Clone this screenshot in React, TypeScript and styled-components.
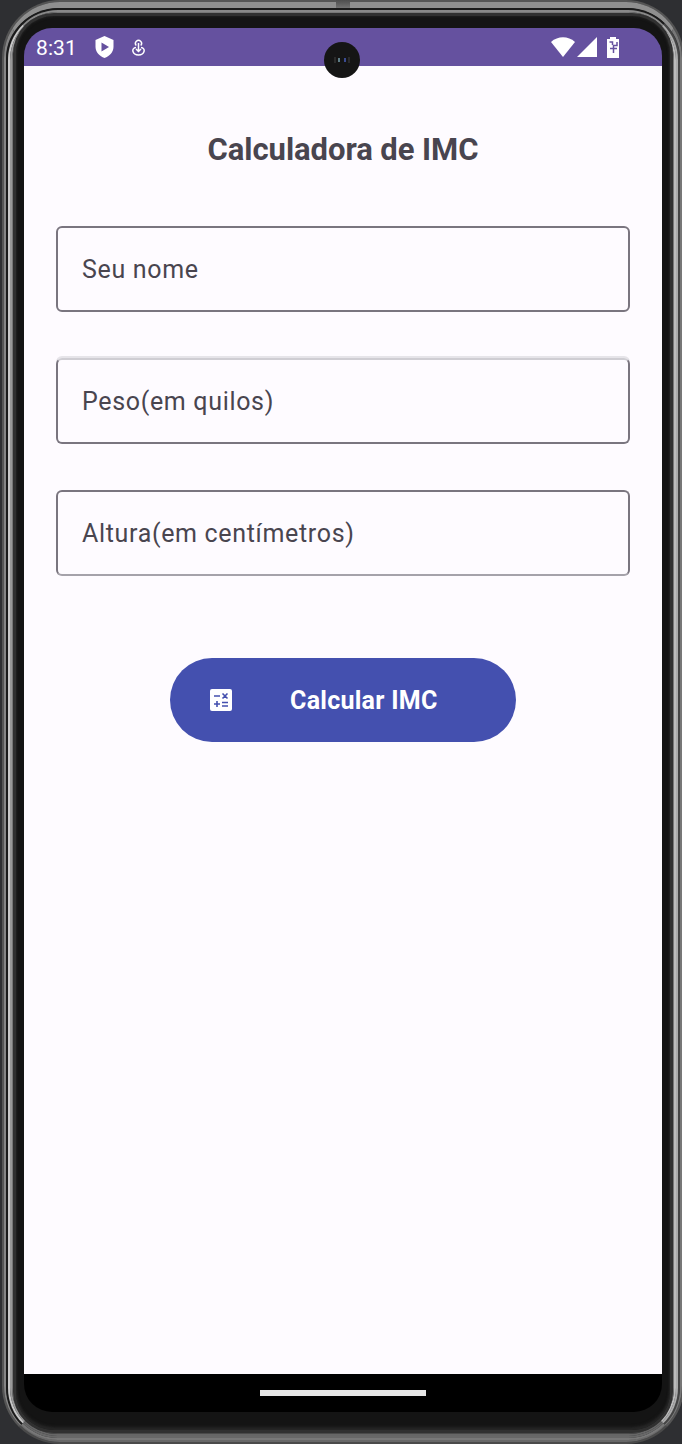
import React from "react";
import styled, { createGlobalStyle } from "styled-components";

const Global = createGlobalStyle`
  * { box-sizing: border-box; }
  body { margin: 0; background: #2e2f32; font-family: Roboto, "Liberation Sans", sans-serif; }
`;

const Stage = styled.div`
  width: 682px;
  height: 1444px;
  padding-left: 2px;
  overflow: hidden;
  display: flex;
  position: relative;
  background: #2e2f32;
`;

const Device = styled.div`
  width: 682px;
  height: 1444px;
  flex: none;
`;

const Ring = styled.div<{ $w: string; $c: string; $r: number }>`
  height: 100%;
  width: 100%;
  border-style: solid;
  border-width: ${(p) => p.$w};
  border-color: ${(p) => p.$c};
  border-radius: ${(p) => p.$r}px;
`;

const Bezel = styled.div`
  height: 100%;
  background: #141414;
  border-radius: 38px;
  padding: 12px 8px 18px;
  box-shadow: 0 0 0 3px #303030, inset 0 0 3px #292929, inset 0 -3px 3px #262626;
`;

const AntennaGap = styled.div`
  position: absolute;
  left: 336px;
  top: 0;
  width: 14px;
  height: 8px;
  background: linear-gradient(#4d4d4d, #727272);
`;

const Screen = styled.main`
  height: 100%;
  display: flex;
  flex-direction: column;
  border-radius: 28px;
  overflow: hidden;
  position: relative;
`;

const StatusBar = styled.header`
  height: 38px;
  flex: none;
  background: #65519f;
  display: flex;
  align-items: center;
  padding: 0 43px 0 12px;
  color: #fff;
`;

const Time = styled.span`
  font-size: 21px;
  font-weight: 400;
  letter-spacing: 0.1px;
  line-height: 38px;
  width: 59px;
  padding-top: 2px;
`;

const Glyph = styled.svg<{ $gap?: number }>`
  display: block;
  flex: none;
  margin-right: ${(p) => p.$gap ?? 0}px;
`;

const Spacer = styled.div`
  flex: 1;
`;

const Camera = styled.div`
  position: absolute;
  left: 300px;
  top: 14px;
  width: 36px;
  height: 36px;
  border-radius: 50%;
  background: #151515;
  display: flex;
  align-items: center;
  justify-content: center;
`;

const Content = styled.section`
  flex: 1;
  display: flex;
  flex-direction: column;
  align-items: center;
  padding: 64px 32px 0;
  background: #fefbff;
`;

const Title = styled.h1`
  margin: 0 0 56px;
  font-size: 31px;
  line-height: 40px;
  font-weight: 700;
  letter-spacing: -0.06px;
  color: #49454f;
  white-space: nowrap;
`;

const Field = styled.label<{ $top?: string; $bottom?: string; $halo?: string }>`
  width: 574px;
  height: 86px;
  margin-bottom: 46px;
  border: 2px solid #7a757f;
  border-top-color: ${(p) => p.$top ?? "#7a757f"};
  border-bottom-color: ${(p) => p.$bottom ?? "#7a757f"};
  border-radius: 6px;
  box-shadow: ${(p) => (p.$halo ? `0 -2px 0 ${p.$halo}` : "none")};
  display: flex;
  align-items: center;
  padding-left: 24px;
  font-size: 25px;
  letter-spacing: 0.67px;
  color: #49454f;
`;

const Button = styled.button`
  margin-top: 36px;
  width: 346px;
  height: 84px;
  border: 0;
  border-radius: 42px;
  background: #4450af;
  color: #fff;
  display: flex;
  align-items: center;
  padding: 0 0 0 40px;
  font: 700 25px Roboto, sans-serif;
`;

const ButtonText = styled.span`
  margin-left: 58px;
  letter-spacing: 0.27px;
  white-space: nowrap;
`;

const NavBar = styled.footer`
  height: 38px;
  flex: none;
  background: #000;
  display: flex;
  align-items: center;
  justify-content: center;
`;

const Handle = styled.div`
  width: 166px;
  height: 6px;
  background: #e6e6e6;
`;

const rings = [
  { w: "2px", c: "#555 #555 #4a4a4a #555", r: 58 },
  { w: "6px 2px 2px 2px", c: "#8f8f8f #777 #686868 #858585", r: 56 },
  { w: "2px", c: "#1a1a1a #444 #787878 #1a1a1a", r: 52 },
  { w: "2px", c: "#888 #aaa #686868 #c8c8c8", r: 50 },
  { w: "2px", c: "#777 #bbb #666 #999", r: 48 },
  { w: "2px", c: "#444 #777 #4a4a4a #777", r: 46 },
  { w: "0 2px 2px 2px", c: "#444 #444 #333 #444", r: 42 },
];

function Phone({ children }: { children: React.ReactNode }) {
  return (
    <Device>
      {rings.reduceRight<React.ReactNode>(
        (inner, ring) => (
          <Ring $w={ring.w} $c={ring.c} $r={ring.r}>
            {inner}
          </Ring>
        ),
        <Bezel>{children}</Bezel>
      )}
    </Device>
  );
}

export default function App() {
  return (
    <>
      <Global />
      <Stage>
        <Phone>
          <Screen>
            <StatusBar>
              <Time>8:31</Time>
              <Glyph $gap={18} width="19" height="22" viewBox="0 0 18 22">
                <path fill="#fff" d="M9 0 18 4v7c0 5-4 9-9 11-5-2-9-6-9-11V4z" />
                <path fill="#65519f" d="M6 6.500v9L13.500 11z" />
              </Glyph>
              <Glyph width="13" height="17" viewBox="0 0 13 17" fill="none" stroke="#fff" strokeWidth="1.500">
                <path d="M4.300 6.500a3 3 0 1 1 4.400 0M6.500 4v8M4 10l2.500 2.500L9 10M4 8.500C-1 9 0 16 6.500 16S14 9 9 8.500" />
              </Glyph>
              <Spacer />
              <Glyph $gap={2} width="24" height="20" viewBox="0 0 24 20">
                <path fill="#fff" d="M0 5C7-1.200 17-1.200 24 5L12 20z" />
              </Glyph>
              <Glyph $gap={10} width="20" height="20" viewBox="0 0 20 20">
                <path fill="#fff" d="M20 0v20H0z" />
              </Glyph>
              <Glyph width="12" height="21" viewBox="0 0 12 21">
                <path fill="#fff" d="M3 0h6v2h3v19H0V2h3z" />
                <path stroke="#65519f" strokeWidth="1.500" fill="none" d="M2.500 5h3v3M10 5v3.500H6.500V16M3 11.500h7" />
              </Glyph>
            </StatusBar>
            <Content>
              <Title>Calculadora de IMC</Title>
              <Field>Seu nome</Field>
              <Field $top="#cfcdd3" $halo="#e6e4e9">Peso(em quilos)</Field>
              <Field $bottom="#a5a2aa">Altura(em centímetros)</Field>
              <Button>
                <Glyph width="22" height="22" viewBox="0 0 22 22">
                  <rect width="22" height="22" rx="2" fill="#fff" />
                  <path
                    stroke="#4450af"
                    strokeWidth="1.600"
                    d="M4 7h6M12.500 4.500l5 5M17.500 4.500l-5 5M4 15h6M7 12v6M12 13.500h6M12 17h6"
                  />
                </Glyph>
                <ButtonText>Calcular IMC</ButtonText>
              </Button>
            </Content>
            <NavBar>
              <Handle />
            </NavBar>
            <Camera>
              <svg width="16" height="8" viewBox="0 0 16 8">
                <path fill="#2b2b2b" d="M0 1h2v6H0zM14 1h2v6h-2z" />
                <path fill="#5e7d86" d="M4 2h2v4H4z" />
                <path fill="#3a4b91" d="M10 2h2v4h-2z" />
              </svg>
            </Camera>
          </Screen>
        </Phone>
        <AntennaGap />
      </Stage>
    </>
  );
}
